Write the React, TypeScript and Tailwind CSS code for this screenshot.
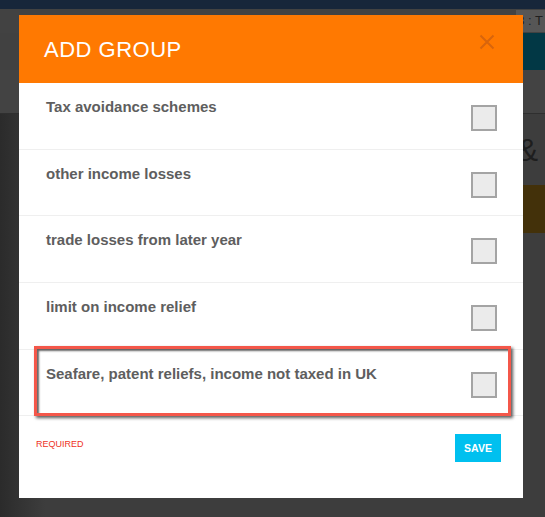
import { useState } from 'react'

const groups = [
  'Tax avoidance schemes',
  'other income losses',
  'trade losses from later year',
  'limit on income relief',
  'Seafare, patent reliefs, income not taxed in UK',
]

function CloseIcon() {
  return (
    <svg width="16" height="16" viewBox="0 0 16 16" fill="none">
      <path d="M1.5 1.5 14.5 14.5M14.5 1.5 1.5 14.5" stroke="#d8650c" strokeWidth="2" />
    </svg>
  )
}

function GroupRow({ label, checked, onToggle }: { label: string; checked: boolean; onToggle: () => void }) {
  return (
    <div className="flex h-[66.7px] items-start justify-between border-b border-[#efefef] pr-[26px] pl-[27px]">
      <span className="pt-[13px] text-[15px] leading-[21px] font-bold text-[#5e5e5e]">{label}</span>
      <button
        type="button"
        onClick={onToggle}
        className={`mt-[22px] h-[26px] w-[26px] border-2 border-[#a4a4a4] ${checked ? 'bg-[#cfcfcf]' : 'bg-[#ebebeb]'}`}
      />
    </div>
  )
}

export default function App() {
  const [checked, setChecked] = useState<boolean[]>(groups.map(() => false))

  return (
    <div className="relative h-[517px] w-[545px] overflow-hidden bg-[#3c3c3c] font-['Liberation_Sans',Arial,sans-serif]">
      {/* page behind the overlay */}
      <div className="h-[9px] bg-[#17263a]" />
      <div className="flex h-[105px] flex-col border-b border-[#2f2f2f] bg-[#414141]">
        <div className="flex h-[24px] items-center justify-end bg-[#424242]">
          <span className="bg-[#565656] pr-[2px] pl-[1px] text-[13px] leading-[22px] text-[#1f1f1f]">3 : T</span>
        </div>
        <div className="flex h-[37px] justify-end">
          <div className="w-[60px] bg-[#023845]" />
        </div>
        <div className="flex-1 bg-[#434343]" />
      </div>
      <div className="flex h-[403px] flex-col bg-[linear-gradient(90deg,#2b2b2b_0px,#3d3d3d_45px)]">
        <div className="flex h-[71px] items-start justify-end pt-[16px] pr-[7px]">
          <span className="text-[32px] leading-[40px] text-[#1e1e1e]">&amp;</span>
        </div>
        <div className="flex h-[48px] justify-end">
          <div className="w-[60px] bg-[#43310a]" />
        </div>
      </div>

      {/* modal */}
      <div className="absolute top-[15px] left-[19px] flex h-[483px] w-[504px] flex-col bg-white">
        <div className="flex h-[68px] shrink-0 items-center justify-between bg-[#ff7901] pr-[28px] pl-[25px]">
          <h2 className="pt-[1px] text-[22px] leading-[26px] tracking-[0.5px] text-white">ADD GROUP</h2>
          <button type="button" className="-mt-[14px]" aria-label="Close">
            <CloseIcon />
          </button>
        </div>

        <div className="flex flex-col">
          {groups.map((g, i) => (
            <GroupRow
              key={g}
              label={g}
              checked={checked[i]}
              onToggle={() => setChecked(checked.map((c, j) => (j === i ? !c : c)))}
            />
          ))}
        </div>

        <div className="flex items-start justify-between pt-[18px] pr-[22px] pl-[17px]">
          <span className="pt-[4px] text-[9px] leading-[12px] text-[#ee3324]">REQUIRED</span>
          <button
            type="button"
            className="h-[28px] w-[46px] bg-[#00c0ef] text-[10.5px] font-bold text-white"
          >
            SAVE
          </button>
        </div>
      </div>

      {/* highlight annotation */}
      <div className="pointer-events-none absolute top-[346px] left-[34px] h-[70px] w-[477px] border-[3px] border-[#f4574a] shadow-[2px_2px_3px_rgba(0,0,0,0.65),inset_2px_2px_2px_rgba(0,0,0,0.6)]" />
    </div>
  )
}
